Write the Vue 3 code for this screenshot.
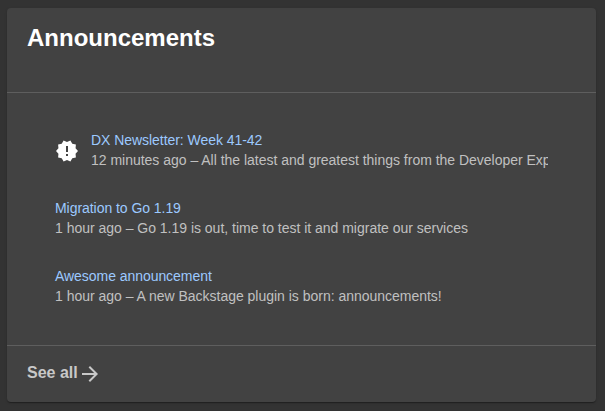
<script setup>
const items = [
  { title: 'DX Newsletter: Week 41-42', time: '12 minutes ago', text: 'All the latest and greatest things from the Developer Exp', isNew: true },
  { title: 'Migration to Go 1.19', time: '1 hour ago', text: 'Go 1.19 is out, time to test it and migrate our services' },
  { title: 'Awesome announcement', time: '1 hour ago', text: 'A new Backstage plugin is born: announcements!' },
]
</script>

<template>
  <main class="page">
    <section class="card">
      <header class="head"><h2>Announcements</h2></header>
      <ul class="list">
        <li v-for="item in items" :key="item.title" class="item">
          <svg v-if="item.isNew" class="badge" viewBox="0 0 24 24">
            <path d="M23 12l-2.44-2.78.34-3.68-3.61-.82-1.89-3.18L12 3 8.6 1.54 6.71 4.72l-3.61.81.34 3.68L1 12l2.44 2.78-.34 3.69 3.61.82 1.89 3.18L12 21l3.4 1.46 1.89-3.18 3.61-.82-.34-3.68L23 12zm-10 5h-2v-2h2v2zm0-4h-2V7h2v6z" />
          </svg>
          <div class="body">
            <a class="title">{{ item.title }}</a>
            <p class="text">{{ item.time }} – {{ item.text }}</p>
          </div>
        </li>
      </ul>
      <footer class="foot">
        <span>See all</span>
        <svg class="arrow" viewBox="0 0 24 24"><path d="M12 4l-1.41 1.41L16.17 11H4v2h12.17l-5.58 5.59L12 20l8-8z" /></svg>
      </footer>
    </section>
  </main>
</template>

<style>
body { background: #333; }
</style>

<style scoped>
.page {
  box-sizing: border-box;
  height: 411px;
  padding: 8px 9px 9px 7px;
  background: #333;
  font-family: "Liberation Sans", Arial, sans-serif;
  overflow: hidden;
}
.card {
  box-sizing: border-box;
  height: 394px;
  display: flex;
  flex-direction: column;
  background: #424242;
  border-radius: 4px;
  box-shadow: 0 2px 1px -1px rgba(0,0,0,.2), 0 1px 1px rgba(0,0,0,.14), 0 1px 3px rgba(0,0,0,.12);
}
.head {
  box-sizing: border-box;
  height: 85px;
  padding: 15px 20px;
  border-bottom: 1px solid #5e5e5e;
}
h2 { margin: 0; font-size: 24px; line-height: 29px; color: #fff; }
.list {
  flex: 1;
  list-style: none;
  margin: 0;
  padding: 23px 48px 0;
}
.item { display: flex; align-items: center; height: 68px; }
.badge { flex: none; width: 24px; height: 24px; margin: 2px 12px 0 0; fill: #fff; }
.body { min-width: 0; flex: 1; }
.title { display: block; font-size: 14px; letter-spacing: -0.05px; line-height: 20px; color: #9cc9ff; }
.text {
  margin: 0;
  font-size: 14px;
  letter-spacing: -0.015px;
  line-height: 20px;
  color: #c0c0c0;
  white-space: nowrap;
  overflow: hidden;
}
.foot {
  box-sizing: border-box;
  height: 57px;
  display: flex;
  align-items: center;
  padding: 0 20px;
  border-top: 1px solid #5e5e5e;
  color: #c8c8c8;
  font-size: 16px;
  font-weight: 700;
}
.foot span { line-height: 18px; margin-bottom: 2px; }
.arrow { width: 24px; height: 24px; fill: #c8c8c8; }
</style>
